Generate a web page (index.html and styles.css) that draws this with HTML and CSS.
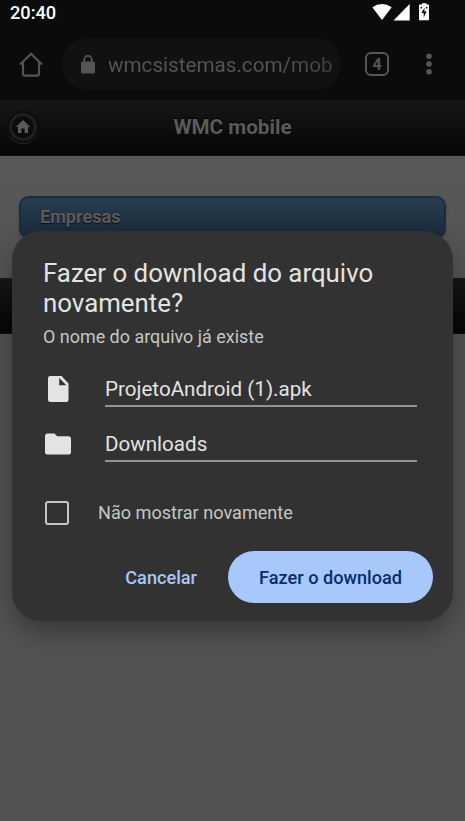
FILE: index.html
```html
<!DOCTYPE html>
<html lang="pt-BR">
<head>
<meta charset="utf-8">
<title>WMC mobile</title>
<link rel="stylesheet" href="styles.css">
</head>
<body>
<div class="screen">
  <header class="status">
    <span class="clock">20:40</span>
    <svg class="status-icons" width="60" height="21" viewBox="0 0 60 21">
      <path d="M0.3 7.2Q10 0.7 19.7 7.2L10 20Z"/>
      <path d="M37.700 4V20.500H21.500Z"/>
      <path d="M50 3.200H54.500V4.500H57V20.200H47V4.500h3z"/>
      <path class="bolt" d="M52.500 7.500L49.500 13h2.200v4.500l3-6h-2.200zM48.500 7h1.500v1.500h-1.500zM54 7h1.500v1.500H54z"/>
    </svg>
  </header>
  <nav class="browser">
    <svg class="home" width="24" height="25" viewBox="0 0 24 25"><path d="M1 12.500L12 1.800L23 12.500M4 10.500V21.500Q4 23.600 6 23.600H18Q20 23.600 20 21.500V10.500"/></svg>
    <div class="address">
      <svg class="lock" width="14" height="19" viewBox="0 0 14 19"><path class="shackle" d="M3.300 7V4.500a3.700 3.700 0 0 1 7.400 0V7"/><rect y="6.500" width="14" height="12" rx="1.600"/></svg>
      <span class="url">wmcsistemas.com/mob</span>
    </div>
    <span class="tabs">4</span>
    <svg class="more" width="6" height="22" viewBox="0 0 6 22"><circle cx="3" cy="3.200" r="2.800"/><circle cx="3" cy="11" r="2.800"/><circle cx="3" cy="18.800" r="2.800"/></svg>
  </nav>
  <main class="page">
    <div class="bar top">
      <span class="round"><svg width="16" height="14" viewBox="0 0 16 14"><path d="M8 0L15.300 7H13V13H9.600V8.500H6.400V13H3V7H.7Z"/></svg></span>
      <h1>WMC mobile</h1>
    </div>
    <div class="list">Empresas</div>
    <div class="bar bottom"></div>
  </main>
  <section class="dialog">
    <h2>Fazer o download do arquivo<br>novamente?</h2>
    <p class="subtitle">O nome do arquivo já existe</p>
    <div class="field">
      <svg width="30" height="28" viewBox="0 0 30 28"><path d="M5.200 1H16.500L23.500 8.500V24.500Q23.500 27 21 27H5.500Q3 27 3 24.500V3.200Q3 1 5.200 1ZM14.200 3V10.200H21.400Z" fill-rule="evenodd" transform="translate(2)"/></svg>
      <span class="value">ProjetoAndroid (1).apk</span>
    </div>
    <div class="field">
      <svg width="30" height="28" viewBox="0 0 30 28"><path d="M4.600 3.500H11.500L14.200 6.200H25.500Q28 6.200 28 8.700V22Q28 24.500 25.500 24.500H4.500Q2 24.500 2 22V6Q2 3.500 4.600 3.500Z"/></svg>
      <span class="value">Downloads</span>
    </div>
    <div class="option"><span class="box"></span><span class="label">Não mostrar novamente</span></div>
    <div class="actions">
      <span class="cancel">Cancelar</span>
      <span class="confirm">Fazer o download</span>
    </div>
  </section>
</div>
</body>
</html>
```
FILE: styles.css
```css
* { box-sizing: border-box; }
body { margin: 0; font-family: Roboto, sans-serif; background: #545454; }
h1, h2, p { margin: 0; }
svg { display: block; flex: none; }
.screen { position: relative; width: 465px; height: 821px; overflow: hidden; background: #545454; }
.status { height: 28px; padding: 0 28px 0 10px; display: flex; justify-content: space-between; background: #0b0b0b; color: #fff; }
.clock { font-size: 18.200px; line-height: 26px; font-weight: 500; }
.status-icons { margin-right: 5px; fill: #fff; }
.status-icons .bolt { fill: #0b0b0b; }
.browser { height: 72px; padding: 10px 33px 10px 19px; display: flex; align-items: center; background: #0b0b0b; color: #555; }
.home { fill: none; stroke: #535353; stroke-width: 2.200; }
.address { width: 279px; height: 52px; margin-left: 19px; padding: 0 8px 0 19px; border-radius: 26px; background: #111; display: flex; align-items: center; }
.lock { fill: #555; }
.shackle { fill: none; stroke: #555; stroke-width: 1.800; }
.url { margin: 1px 0 0 13px; white-space: nowrap; font-size: 20.650px; line-height: 30px; background: linear-gradient(90deg, #555 75%, #3e3e3e); background-clip: text; color: transparent; }
.tabs { width: 24px; height: 24px; margin-left: 24px; border: 2px solid #555; border-radius: 6px; font-size: 16px; line-height: 21px; text-align: center; font-weight: 700; }
.more { margin-left: auto; fill: #555; }
.page { height: 721px; background: linear-gradient(#5a5a5a, #535353 230px); }
.bar { height: 56px; border-top: 1px solid #1a1a1a; border-bottom: 1px solid #111; background: linear-gradient(#171717, #050505); }
.top { display: flex; align-items: center; }
.round { width: 32px; height: 32px; margin: 0 0 3px 7px; display: grid; place-items: center; border: 1px solid #060606; border-radius: 50%; background: radial-gradient(circle, #0c0c0c 11px, #303030 12px, #151515 13px); box-shadow: 0 1px 0 #292929; }
.round svg { fill: #5b5b5b; }
h1 { flex: 1; margin: 0 39px 3px 0; text-align: center; font-size: 20.700px; line-height: 28px; font-weight: 700; color: #5b5b5b; text-shadow: 0 -1px 1px #000; }
.list { height: 43px; margin: 40px 19px 0; padding-left: 19px; border: 2px solid #1b2d3e; border-radius: 10px; background: linear-gradient(#283e4e, #182a3b); box-shadow: 0 1px 3px #444; color: #5b5b5b; font-size: 18.100px; line-height: 38px; font-weight: 700; text-shadow: 0 1px 1px #111; }
.bottom { margin-top: 39px; }
.dialog { position: absolute; left: 12px; top: 231px; width: 441px; height: 390px; padding: 27px 20px 18px 31px; border-radius: 29px; background: #323232; box-shadow: 0 11px 28px rgba(0,0,0,.34); }
h2 { font-size: 25.850px; line-height: 30px; font-weight: 400; color: #e3e3e3; white-space: nowrap; }
.subtitle { margin: 7px 0 25px; font-size: 17.950px; line-height: 24px; color: #c4c7c5; }
.field { height: 55px; display: flex; }
.field svg { margin-top: 1px; fill: #e3e3e3; }
.value { width: 312px; height: 33px; margin: 0 0 0 32px; border-bottom: 2px solid #939393; color: #e3e3e3; font-size: 20.600px; line-height: 31px; }
.option { height: 26px; margin-top: 16px; display: flex; align-items: center; color: #c4c7c5; font-size: 18.100px; line-height: 24px; }
.box { width: 24px; height: 24px; margin: 0 29px 0 2px; border: 2px solid #c4c7c5; border-radius: 3px; }
.actions { margin-top: 25px; display: flex; justify-content: flex-end; align-items: center; gap: 31px; font-size: 18.150px; font-weight: 500; }
.cancel { color: #a8c7fa; }
.confirm { width: 205px; height: 52px; line-height: 53px; text-align: center; border-radius: 26px; background: #a8c7fa; color: #062e6f; }
```
